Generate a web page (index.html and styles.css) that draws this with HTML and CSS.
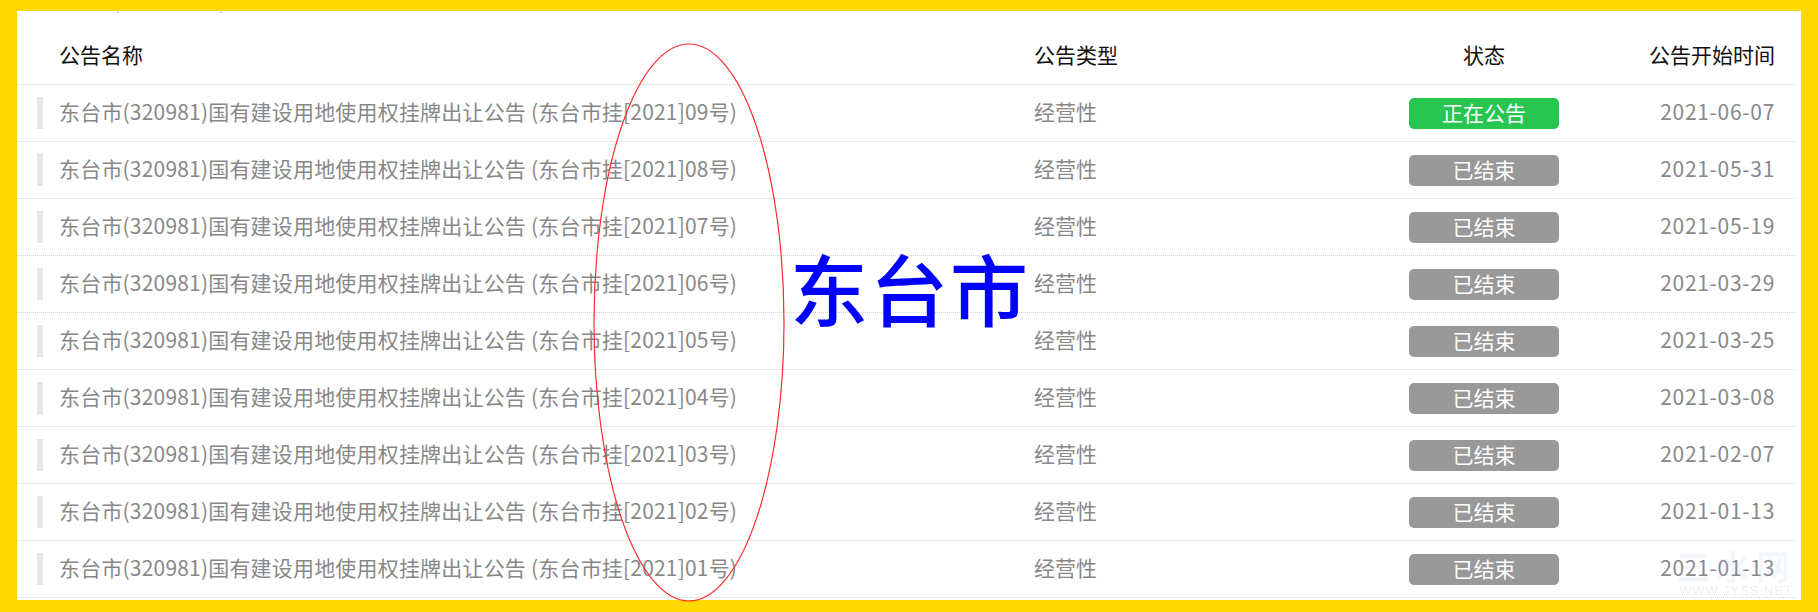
FILE: index.html
```html
<!DOCTYPE html>
<html lang="zh-CN">
<head>
<meta charset="utf-8">
<title>公告列表</title>
<link rel="stylesheet" href="styles.css">
</head>
<body>
<div class="panel">
  <div class="tabs"><span class="tab"></span><span class="tab"></span></div>
  <div class="row head">
    <span class="bar-slot"></span>
    <span class="c-name">公告名称</span>
    <span class="c-type">公告类型</span>
    <span class="c-state">状态</span>
    <span class="c-date">公告开始时间</span>
  </div>
  <div class="row">
    <span class="bar"></span>
    <span class="c-name">东台市(320981)国有建设用地使用权挂牌出让公告 (东台市挂[2021]09号)</span>
    <span class="c-type">经营性</span>
    <span class="c-state"><span class="badge on">正在公告</span></span>
    <span class="c-date">2021-06-07</span>
  </div>
  <div class="row">
    <span class="bar"></span>
    <span class="c-name">东台市(320981)国有建设用地使用权挂牌出让公告 (东台市挂[2021]08号)</span>
    <span class="c-type">经营性</span>
    <span class="c-state"><span class="badge">已结束</span></span>
    <span class="c-date">2021-05-31</span>
  </div>
  <div class="row">
    <span class="bar"></span>
    <span class="c-name">东台市(320981)国有建设用地使用权挂牌出让公告 (东台市挂[2021]07号)</span>
    <span class="c-type">经营性</span>
    <span class="c-state"><span class="badge">已结束</span></span>
    <span class="c-date">2021-05-19</span>
  </div>
  <div class="row">
    <span class="bar"></span>
    <span class="c-name">东台市(320981)国有建设用地使用权挂牌出让公告 (东台市挂[2021]06号)</span>
    <span class="c-type">经营性</span>
    <span class="c-state"><span class="badge">已结束</span></span>
    <span class="c-date">2021-03-29</span>
  </div>
  <div class="row">
    <span class="bar"></span>
    <span class="c-name">东台市(320981)国有建设用地使用权挂牌出让公告 (东台市挂[2021]05号)</span>
    <span class="c-type">经营性</span>
    <span class="c-state"><span class="badge">已结束</span></span>
    <span class="c-date">2021-03-25</span>
  </div>
  <div class="row">
    <span class="bar"></span>
    <span class="c-name">东台市(320981)国有建设用地使用权挂牌出让公告 (东台市挂[2021]04号)</span>
    <span class="c-type">经营性</span>
    <span class="c-state"><span class="badge">已结束</span></span>
    <span class="c-date">2021-03-08</span>
  </div>
  <div class="row">
    <span class="bar"></span>
    <span class="c-name">东台市(320981)国有建设用地使用权挂牌出让公告 (东台市挂[2021]03号)</span>
    <span class="c-type">经营性</span>
    <span class="c-state"><span class="badge">已结束</span></span>
    <span class="c-date">2021-02-07</span>
  </div>
  <div class="row">
    <span class="bar"></span>
    <span class="c-name">东台市(320981)国有建设用地使用权挂牌出让公告 (东台市挂[2021]02号)</span>
    <span class="c-type">经营性</span>
    <span class="c-state"><span class="badge">已结束</span></span>
    <span class="c-date">2021-01-13</span>
  </div>
  <div class="row">
    <span class="bar"></span>
    <span class="c-name">东台市(320981)国有建设用地使用权挂牌出让公告 (东台市挂[2021]01号)</span>
    <span class="c-type">经营性</span>
    <span class="c-state"><span class="badge">已结束</span></span>
    <span class="c-date">2021-01-13</span>
  </div>
</div>

<div class="watermark"><span class="wm-big">三水网</span><span class="wm-url">WWW.JYSS.NET</span></div>

<svg class="mark" width="1818" height="612" viewBox="0 0 1818 612" xmlns="http://www.w3.org/2000/svg">
  <ellipse cx="689" cy="322.5" rx="95" ry="278.5" fill="none" stroke="#ff2a2a" stroke-width="1.2"/>
</svg>
<div class="stamp">东台市</div>
</body>
</html>
```

FILE: styles.css
```css
html, body {
  margin: 0;
  padding: 0;
}
body {
  position: relative;
  width: 1818px;
  height: 612px;
  box-sizing: border-box;
  padding: 11px 17px 12px 17px;
  background: #ffd800;
  font-family: "Noto Sans CJK SC", "Noto Sans", sans-serif;
  overflow: hidden;
}
.panel {
  background: #fff;
  height: 589px;
  box-sizing: border-box;
  padding-right: 5px;
}
.tabs {
  display: flex;
  height: 2px;
}
.tab {
  width: 102px;
  height: 2px;
  border-right: 2px solid #d6d6d6;
  box-sizing: border-box;
}
.tab + .tab {
  width: 103px;
}
.row {
  display: grid;
  grid-template-columns: 6px 991px 375px 150px 216px;
  align-items: center;
  height: 57px;
  box-sizing: border-box;
  padding: 0 21px 0 20px;
  border-bottom: 1px dotted #d4d4d4;
  font-size: 21px;
  line-height: 28px;
  color: #888;
}
.row.head {
  margin-top: 15px;
  color: #111;
}
.bar {
  height: 32px;
  background: #e6e6e6;
}
.c-name,
.c-type,
.c-date {
  padding-bottom: 5px;
}
.c-name {
  padding-left: 16px;
  white-space: nowrap;
  letter-spacing: 0.19px;
}
.row.head .c-name {
  letter-spacing: 0;
}
.c-state {
  display: flex;
  justify-content: center;
}
.row.head .c-state {
  padding-bottom: 5px;
}
.c-date {
  text-align: right;
  letter-spacing: 0.7px;
}
.row.head .c-date {
  letter-spacing: 0;
}
.badge {
  display: block;
  width: 150px;
  height: 31px;
  box-sizing: border-box;
  padding-bottom: 3px;
  line-height: 28px;
  border-radius: 5px;
  background: #999;
  color: #fff;
  text-align: center;
  font-size: 21px;
}
.badge.on {
  background: #28c651;
}
.watermark {
  position: absolute;
  left: 1674px;
  top: 548px;
  width: 124px;
  display: flex;
  flex-direction: column;
  align-items: center;
  pointer-events: none;
}
.wm-big {
  font-size: 34px;
  line-height: 36px;
  letter-spacing: 6px;
  color: rgba(190, 205, 225, 0.16);
  font-weight: 700;
}
.wm-url {
  font-family: "Liberation Sans", sans-serif;
  font-size: 13px;
  line-height: 14px;
  letter-spacing: 1px;
  color: rgba(180, 195, 215, 0.28);
}
.mark {
  position: absolute;
  left: 0;
  top: 0;
  pointer-events: none;
}
.stamp {
  position: absolute;
  left: 790px;
  top: 248px;
  font-size: 78px;
  line-height: 78px;
  letter-spacing: 2px;
  font-weight: 500;
  color: #0000ff;
  white-space: nowrap;
}
```
